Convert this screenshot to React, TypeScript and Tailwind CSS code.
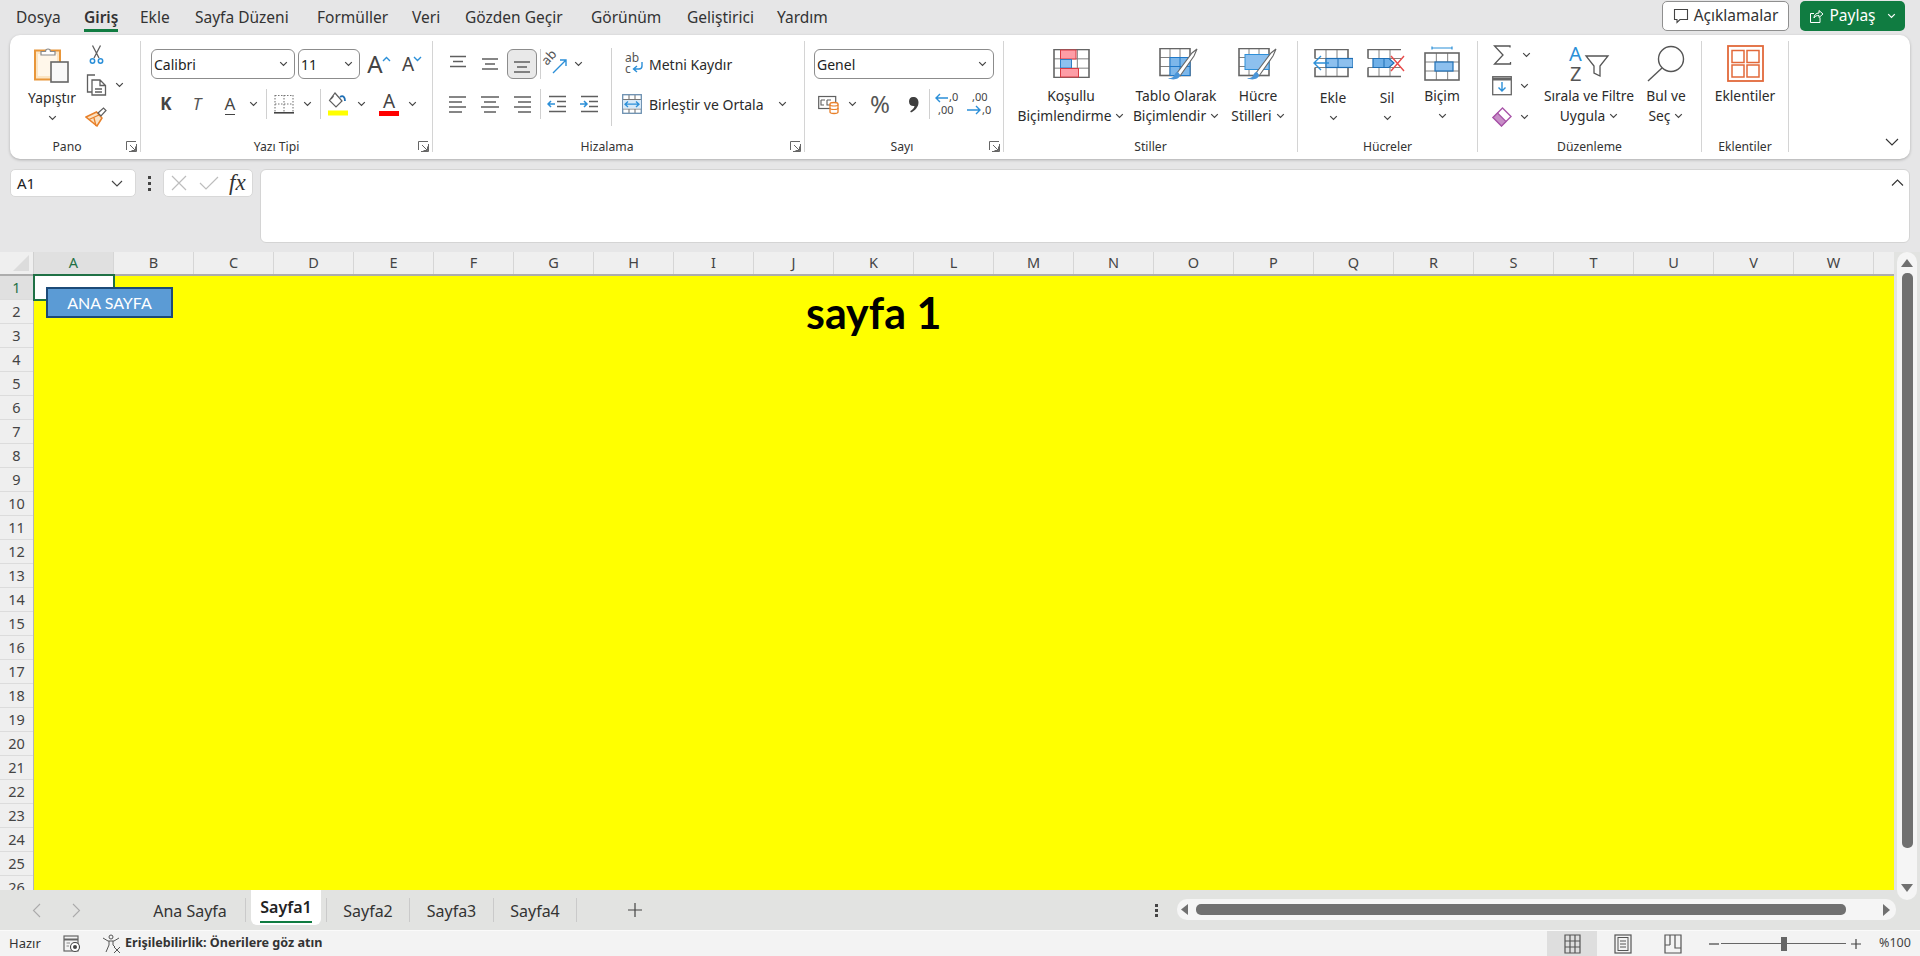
import React from "react";

const G = "#5f5f5f";
const B = "#2b8fd8";

function Chev({ className = "" }: { className?: string }) {
  return (
    <svg width="9" height="6" viewBox="0 0 9 6" className={"shrink-0 " + className}>
      <path d="M1.2 1.2 4.5 4.5 7.8 1.2" fill="none" stroke="#444" strokeWidth="1.2" />
    </svg>
  );
}
function Launcher() {
  return (
    <svg width="11" height="11" viewBox="0 0 11 11" className="absolute right-[3px] top-[3px]">
      <path d="M.5 9V.5H10M4 4l5.5 5.5M9.5 5.5v4h-4M10.5 3v7.5H3" fill="none" stroke="#666" strokeWidth="1" />
    </svg>
  );
}
function Cell({ className = "", children }: { className?: string; children?: React.ReactNode }) {
  return <div className={"flex items-center justify-center shrink-0 h-full " + className}>{children}</div>;
}
function Sep() {
  return <div className="w-px h-[30px] bg-[#d0d0d0] shrink-0" />;
}
function Group({ className, label, labelClass = "", launcher, children }: { className: string; label: string; labelClass?: string; launcher?: boolean; children: React.ReactNode }) {
  return (
    <div className={"flex flex-col shrink-0 h-[111px] border-r border-[#d4d4d4] " + className}>
      <div className="h-[97px] shrink-0">{children}</div>
      <div className={"relative h-[14px] leading-[18px] text-center text-[12.2px] text-[#333] " + labelClass}>
        {label}
        {launcher && <Launcher />}
      </div>
    </div>
  );
}
function Select({ className, label }: { className: string; label: string }) {
  return (
    <div className={"h-[30px] shrink-0 rounded-[6px] border border-[#8c8c8c] flex items-center justify-between pl-[2px] pr-[6px] text-[14px] text-[#222] bg-white " + className}>
      <span>{label}</span>
      <Chev />
    </div>
  );
}
function BigBtn({ className, icon, l1, l2, chev2, chevBelow, textClass = "" }: { className: string; icon: React.ReactNode; l1: string; l2?: string; chev2?: boolean; chevBelow?: boolean; textClass?: string }) {
  return (
    <div className={"flex flex-col items-center shrink-0 h-full " + className}>
      <div className="h-[45px] flex items-center justify-center shrink-0">{icon}</div>
      <div className={"h-[20px] leading-[20px] text-[13.8px] text-[#2b2b2b] whitespace-nowrap " + textClass}>{l1}</div>
      {l2 && (
        <div className="h-[20px] leading-[20px] text-[13.8px] text-[#2b2b2b] whitespace-nowrap flex items-center gap-[4px]">
          {l2}
          {chev2 && <Chev />}
        </div>
      )}
      {chevBelow && (
        <div className="h-[20px] flex items-center">
          <Chev />
        </div>
      )}
    </div>
  );
}

function Paste() {
  return (
    <svg width="36" height="38" viewBox="0 0 36 38">
      <rect x="1" y="5.5" width="25" height="29" fill="#fbe5c4" stroke="#e8963a" strokeWidth="2" />
      <rect x="4" y="9" width="19" height="22" fill="#fff7ea" />
      <path d="M7 10V6.5h4.5a2.5 2.5 0 0 1 5 0H21V10z" fill="#fff" stroke="#8a8a8a" strokeWidth="1.2" />
      <rect x="17" y="17" width="17" height="20" fill="#f8f8f8" stroke="#666" strokeWidth="1.6" />
    </svg>
  );
}
function Scissors() {
  return (
    <svg width="15" height="20" viewBox="0 0 15 20">
      <path d="M3.5 .5 10 13M11.5 .5 5 13" fill="none" stroke={G} strokeWidth="1.3" />
      <circle cx="3.5" cy="16" r="2.2" fill="none" stroke={B} strokeWidth="1.5" />
      <circle cx="11.5" cy="16" r="2.2" fill="none" stroke={B} strokeWidth="1.5" />
    </svg>
  );
}
function Copy() {
  return (
    <svg width="21" height="22" viewBox="0 0 21 22">
      <path d="M9 1H1.5v17H6" fill="none" stroke={G} strokeWidth="1.3" />
      <path d="M6 6h8l5.5 5.5V21H6zM14 6v5.5h5.5M9 15h7M9 18h7" fill="#fff" stroke={G} strokeWidth="1.3" />
    </svg>
  );
}
function Painter() {
  return (
    <svg width="22" height="20" viewBox="0 0 22 20">
      <path d="M1 10 11.5 5 17 11l-5 8z" fill="#fbe2c3" stroke="#e8802a" strokeWidth="1.5" />
      <path d="M4 12.5 14 8M9 11l2 8" stroke="#e8802a" strokeWidth="1.3" />
      <path d="M13 6 18.5 1 21 3.5 16 9z" fill="#fff" stroke={G} strokeWidth="1.2" />
    </svg>
  );
}
function GrowArrow({ down = false }: { down?: boolean }) {
  return (
    <svg width="9" height="6" viewBox="0 0 9 6" className="mb-[17px] -ml-[1px] shrink-0">
      <path d={down ? "M1 1l3.5 3.5L8 1" : "M1 5l3.5-3.5L8 5"} fill="none" stroke={B} strokeWidth="1.4" />
    </svg>
  );
}
function Borders() {
  return (
    <svg width="20" height="20" viewBox="0 0 20 20">
      <path d="M1 1.5H19M1 10H19M1 1v17M10 1v17M19 1v17" fill="none" stroke="#777" strokeWidth="1.1" strokeDasharray="1.5 1.5" />
      <path d="M0 18.8H20" stroke="#444" strokeWidth="1.6" />
    </svg>
  );
}
function Bucket() {
  return (
    <svg width="21" height="24" viewBox="0 0 21 24">
      <path d="M7 1 14 9 8 15 1.500 8.500z" fill="#fff" stroke={G} strokeWidth="1.2" />
      <path d="M5.500 4 3 7" stroke={G} strokeWidth="1.2" />
      <path d="M12 5c3-2 5 0 5 4" fill="none" stroke="#1f6fb5" strokeWidth="1.8" />
      <rect x="0" y="18.500" width="20" height="5" fill="#ffff00" />
    </svg>
  );
}
function Lines({ d, blue }: { d: string; blue?: string }) {
  return (
    <svg width="20" height="20" viewBox="0 0 20 20">
      <path d={d} fill="none" stroke={G} strokeWidth="1.4" />
      {blue && <path d={blue} fill="none" stroke={B} strokeWidth="1.5" />}
    </svg>
  );
}
function Orient() {
  return (
    <svg width="24" height="24" viewBox="0 0 24 24" className="overflow-visible">
      <text x="0" y="0" fontSize="13" fill="#555" fontFamily="Noto Sans" transform="translate(2 14) rotate(-48)">ab</text>
      <path d="M8 21 21 8M15 8h6v6" fill="none" stroke={B} strokeWidth="1.4" />
    </svg>
  );
}
function Wrap() {
  return (
    <svg width="20" height="24" viewBox="0 0 20 24" className="overflow-visible">
      <text x="0" y="10" fontSize="12" fill="#555" fontFamily="Noto Sans">ab</text>
      <text x="0" y="21" fontSize="12" fill="#555" fontFamily="Noto Sans">c</text>
      <path d="M17 10v4a3 3 0 0 1-3 3H9M12 14l-3.500 3 3.500 3" fill="none" stroke={B} strokeWidth="1.4" />
    </svg>
  );
}
function Merge() {
  return (
    <svg width="20" height="20" viewBox="0 0 20 20">
      <path d="M7 1v4M13 1v4M7 15v4M13 15v4M1 5.500H19M1 15H19" stroke="#777" strokeWidth="1.1" />
      <rect x=".7" y=".7" width="18.600" height="18.600" fill="none" stroke="#6b8fb0" strokeWidth="1.3" />
      <rect x="1" y="6" width="18" height="8.500" fill="#d7e9f8" />
      <path d="M3 10.200H17M6 7.500 3 10.200l3 2.800M14 7.500l3 2.700-3 2.800" fill="none" stroke={B} strokeWidth="1.3" />
    </svg>
  );
}
function Accounting() {
  return (
    <svg width="22" height="22" viewBox="0 0 22 22">
      <rect x=".7" y="3.500" width="17" height="12" fill="#fff" stroke={G} strokeWidth="1.2" />
      <path d="M3 7H7M3 7v5h3M9 7H13M9 7v5h3" fill="none" stroke={G} strokeWidth="1.1" />
      <path d="M12 11c0-2 8-2 8 0v8c0 2-8 2-8 0z" fill="#fff" stroke="#e8802a" strokeWidth="1.3" />
      <path d="M12 11.500c0 2 8 2 8 0M12 15c0 2 8 2 8 0" fill="none" stroke="#e8802a" strokeWidth="1.2" />
    </svg>
  );
}
function CommaIcon() {
  return (
    <svg width="11" height="17" viewBox="0 0 11 17">
      <path d="M5 1c3.500 0 5.500 2 5.500 5.500 0 4.500-3.500 8-7.500 10l-.8-1.200c2.500-1.500 4-3.300 4.300-5.300C3.500 10.500 1 9 1 5.500 1 3 2.500 1 5 1z" fill="#3f3f3f" />
    </svg>
  );
}
function Decimal({ more = false }: { more?: boolean }) {
  return (
    <svg width="24" height="26" viewBox="0 0 24 26" className="overflow-visible">
      {more ? (
        <>
          <text x="14" y="10" fontSize="11" fill="#444" fontFamily="Noto Sans">,0</text>
          <text x="3" y="23" fontSize="11" fill="#444" fontFamily="Noto Sans">,00</text>
          <path d="M13 7H1M5 3 1 7l4 4" fill="none" stroke={B} strokeWidth="1.4" />
        </>
      ) : (
        <>
          <text x="5" y="10" fontSize="11" fill="#444" fontFamily="Noto Sans">,00</text>
          <text x="15" y="23" fontSize="11" fill="#444" fontFamily="Noto Sans">,0</text>
          <path d="M0 19H13M9 15l4 4-4 4" fill="none" stroke={B} strokeWidth="1.4" />
        </>
      )}
    </svg>
  );
}
function GridLines({ w = 35, h = 28 }: { w?: number; h?: number }) {
  const c1 = w / 3;
  const r1 = h / 3;
  return (
    <path
      d={`M${c1} 0V${h}M${c1 * 2} 0V${h}M0 ${r1}H${w}M0 ${r1 * 2}H${w}`}
      fill="none"
      stroke="#808080"
      strokeWidth="1"
    />
  );
}
function Brush() {
  return (
    <g>
      <path d="M18 25 33 5 38 1 35 8 21 28z" fill="#fff" stroke="#666" strokeWidth="1.1" />
      <path d="M19 24c-3 0-3 3-5 5-1 1-3 1-5 1 5 3 12 1 12-3z" fill="#4a95d8" />
    </g>
  );
}
function CondFmt() {
  return (
    <svg width="37" height="29" viewBox="0 0 37 29">
      <g transform="translate(1 .5)">
        <rect width="35" height="28" fill="#fff" />
        <GridLines />
        <rect width="35" height="28" fill="none" stroke="#666" strokeWidth="1.600" />
        <rect x="6.500" y=".5" width="15.500" height="9" fill="#fd9da6" stroke="#d83b43" strokeWidth="1" />
        <rect x="6.500" y="10" width="11" height="8.500" fill="#8dc0ee" stroke="#2f7fc4" strokeWidth="1" />
        <rect x="6.500" y="19" width="18" height="8.500" fill="#fd9da6" stroke="#d83b43" strokeWidth="1" />
      </g>
    </svg>
  );
}
function TableFmt() {
  return (
    <svg width="40" height="32" viewBox="0 0 40 32" className="ml-[6px]">
      <g transform="translate(1 .5)">
        <rect width="30" height="27" fill="#fff" />
        <GridLines w={30} h={27} />
        <rect width="30" height="27" fill="none" stroke="#666" strokeWidth="1.600" />
        <rect x="10" y="9" width="20" height="18" fill="#7db7ea" stroke="#1f78c8" strokeWidth="1" />
        <path d="M10 18H30M20 9V27" stroke="#1f78c8" strokeWidth="1" />
      </g>
      <Brush />
    </svg>
  );
}
function CellStyle() {
  return (
    <svg width="40" height="32" viewBox="0 0 40 32">
      <g transform="translate(1 .5)">
        <rect width="30" height="27" fill="#fff" />
        <GridLines w={30} h={27} />
        <rect width="30" height="27" fill="none" stroke="#666" strokeWidth="1.600" />
        <rect x="6" y="6" width="24" height="15" fill="#8dc0ee" stroke="#2f8fd8" strokeWidth="1" />
      </g>
      <Brush />
    </svg>
  );
}
function InsertIcon() {
  return (
    <svg width="40" height="29" viewBox="0 0 40 29">
      <g transform="translate(2 .5)">
        <GridLines w={33} h={27} />
        <path d="M0 9V0H33V9M0 18V27H33V18" fill="none" stroke="#666" strokeWidth="1.600" />
        <rect x="11" y="9" width="27" height="9" fill="#8dc0ee" stroke="#1f6fb5" strokeWidth="1.200" />
        <path d="M23 9V18" stroke="#1f6fb5" strokeWidth="1" />
      </g>
      <path d="M16 14H2M8 7 1 14l7 7" fill="none" stroke={B} strokeWidth="1.400" />
    </svg>
  );
}
function DeleteIcon() {
  return (
    <svg width="40" height="29" viewBox="0 0 40 29">
      <g transform="translate(1 .5)">
        <GridLines w={33} h={27} />
        <path d="M0 9V0H33M0 18V27H33" fill="none" stroke="#666" strokeWidth="1.600" />
        <path d="M5 9H21L26 13.500 21 18H5z" fill="#6fb0e8" stroke="#1f6fb5" strokeWidth="1.200" />
        <path d="M16 9V18" stroke="#1f6fb5" strokeWidth="1" />
      </g>
      <path d="M24 7 37 22M37 7 24 22" stroke="#e84a4a" strokeWidth="1.400" />
    </svg>
  );
}
function FormatIcon() {
  return (
    <svg width="36" height="35" viewBox="0 0 36 35">
      <path d="M8 2H28M8 .5V3.500M28 .5V3.500" fill="none" stroke={B} strokeWidth="1.200" />
      <g transform="translate(1 7)">
        <rect width="34" height="27" fill="#fff" />
        <GridLines w={34} h={27} />
        <rect width="34" height="27" fill="none" stroke="#666" strokeWidth="1.600" />
        <rect x="10" y="9" width="18" height="9" fill="#8dc0ee" stroke="#1f6fb5" strokeWidth="1.200" />
      </g>
    </svg>
  );
}
function Sigma() {
  return (
    <svg width="19" height="20" viewBox="0 0 19 20">
      <path d="M17 2.500V1H1.500L10 10 1.500 19H17.500V17" fill="none" stroke="#555" strokeWidth="1.300" />
    </svg>
  );
}
function FillDown() {
  return (
    <svg width="20" height="20" viewBox="0 0 20 20">
      <rect x=".7" y=".7" width="18.600" height="18" fill="#fff" stroke="#666" strokeWidth="1.300" />
      <path d="M1 3H19" stroke="#666" strokeWidth="3" />
      <path d="M10 6V15M6.500 11.500 10 15l3.500-3.500" fill="none" stroke={B} strokeWidth="1.400" />
    </svg>
  );
}
function Eraser() {
  return (
    <svg width="20" height="20" viewBox="0 0 20 20">
      <path d="M10.500 1 19 9.500 9.500 19 1 10.500z" fill="#fff" stroke="#a854a8" strokeWidth="1.400" />
      <path d="M5.500 6 14 14.500 9.500 19 1 10.500z" fill="#c78ec7" stroke="#a854a8" strokeWidth="1.200" />
    </svg>
  );
}
function SortIcon() {
  return (
    <svg width="40" height="36" viewBox="0 0 40 36" className="overflow-visible">
      <text x="0" y="15" fontSize="20" fill={B} fontFamily="Noto Sans">A</text>
      <text x="1" y="35" fontSize="20" fill="#555" fontFamily="Noto Sans">Z</text>
      <path d="M17 10H39L31 20V30L25 27V20z" fill="#fff" stroke="#555" strokeWidth="1.300" />
    </svg>
  );
}
function Magnifier() {
  return (
    <svg width="38" height="37" viewBox="0 0 38 37">
      <circle cx="24" cy="14" r="12.500" fill="#fff" stroke="#555" strokeWidth="1.400" />
      <path d="M15 23 1 36" stroke="#555" strokeWidth="1.400" />
    </svg>
  );
}
function AddIns() {
  return (
    <svg width="37" height="37" viewBox="0 0 37 37">
      <rect x="1" y="1" width="35" height="35" fill="none" stroke="#e2693a" strokeWidth="1.800" />
      <rect x="5" y="5.500" width="12" height="12" fill="none" stroke="#e2693a" strokeWidth="1.500" />
      <rect x="20" y="5.500" width="12" height="12" fill="none" stroke="#e2693a" strokeWidth="1.500" />
      <rect x="5" y="20" width="12" height="12" fill="none" stroke="#e2693a" strokeWidth="1.500" />
      <rect x="20" y="20" width="12" height="12" fill="none" stroke="#e2693a" strokeWidth="1.500" />
    </svg>
  );
}

const tabs = [
  ["Dosya", "w-[68px]", ""],
  ["Giriş", "w-[56px]", "active"],
  ["Ekle", "w-[55px]", ""],
  ["Sayfa Düzeni", "w-[122px]", ""],
  ["Formüller", "w-[95px]", ""],
  ["Veri", "w-[53px]", ""],
  ["Gözden Geçir", "w-[126px]", ""],
  ["Görünüm", "w-[96px]", ""],
  ["Geliştirici", "w-[90px]", ""],
  ["Yardım", "w-[60px]", ""],
];
const cols = "ABCDEFGHIJKLMNOPQRSTUVW".split("");
const rows = Array.from({ length: 26 }, (_, i) => i + 1);

function Tabs() {
  return (
    <div className="h-[35px] shrink-0 flex pl-[16px] pr-[15px]">
      {tabs.map(([t, w, a]) => (
        <div key={t} className={"shrink-0 " + w}>
          <div className={"inline-block h-[32px] leading-[34px] text-[15.5px] text-[#333] whitespace-nowrap border-b-[3px] " + (a ? "font-semibold border-[#107c41]" : "border-transparent")}>{t}</div>
        </div>
      ))}
      <div className="flex-1" />
      <div className="mt-[1px] h-[30px] w-[127px] rounded-[5px] border border-[#8f8f8f] bg-white flex items-center justify-center gap-[5px] text-[15.5px] text-[#333]">
        <svg width="16" height="16" viewBox="0 0 16 16">
          <path d="M1.500 1.500H14.500V11.500H7L4 14.500V11.500H1.500z" fill="none" stroke="#444" strokeWidth="1.100" />
        </svg>
        Açıklamalar
      </div>
      <div className="ml-[11px] mt-[1px] h-[30px] w-[105px] rounded-[5px] bg-[#107c41] flex items-center justify-center gap-[5px] text-[15.5px] text-white">
        <svg width="15" height="15" viewBox="0 0 15 15">
          <path d="M11 8.500V13.500H1.500V4.500H5M5 9c0-3 2-5 5-5V1.500L14 5l-4 3.500V6.500C7.500 6.500 6 7 5 9z" fill="none" stroke="#fff" strokeWidth="1" />
        </svg>
        Paylaş
        <svg width="9" height="6" viewBox="0 0 9 6" className="ml-[6px]">
          <path d="M1.200 1.200 4.500 4.500 7.800 1.200" fill="none" stroke="#fff" strokeWidth="1.200" />
        </svg>
      </div>
    </div>
  );
}

function Ribbon() {
  return (
    <div className="ml-[10px] w-[1900px] h-[124px] shrink-0 bg-white rounded-[10px] shadow-[0_1px_3px_rgba(0,0,0,0.25)] pt-[6px] flex">
      <Group className="w-[131px]" label="Pano" labelClass="pr-[16px]" launcher>
        <div className="flex h-full pl-[14px]">
          <BigBtn className="w-[56px]" icon={<Paste />} l1="Yapıştır" chevBelow textClass="mt-[2px]" />
          <div className="ml-[4px] w-[46px] flex flex-col shrink-0">
            <div className="h-[28px] flex"><Cell className="w-[24px]"><Scissors /></Cell></div>
            <div className="h-[32px] flex"><Cell className="w-[24px]"><Copy /></Cell><Cell className="w-[22px]"><Chev /></Cell></div>
            <div className="h-[31px] flex"><Cell className="w-[24px]"><Painter /></Cell></div>
          </div>
        </div>
      </Group>

      <Group className="w-[292px]" label="Yazı Tipi" labelClass="pr-[20px]" launcher>
        <div className="flex flex-col h-full pl-[10px] pt-[8px]">
          <div className="h-[30px] flex items-center">
            <Select className="w-[144px]" label="Calibri" />
            <Select className="w-[62px] ml-[3px]" label="11" />
            <div className="w-[36px] ml-[1px] h-[30px] flex items-end justify-center">
              <span className="text-[24px] leading-[30px] text-[#444]">A</span><GrowArrow />
            </div>
            <div className="w-[30px] h-[30px] flex items-end justify-center">
              <span className="text-[19px] leading-[29px] text-[#444]">A</span><GrowArrow down />
            </div>
          </div>
          <div className="h-[30px] mt-[10px] flex items-center">
            <Cell className="w-[30px] text-[17px] font-bold text-[#444]">K</Cell>
            <Cell className="w-[32px] text-[17px] italic text-[#555]">T</Cell>
            <Cell className="w-[34px]"><span className="text-[17px] leading-[21px] text-[#444] border-b border-[#444]">A</span></Cell>
            <Cell className="w-[12px]"><Chev /></Cell>
            <div className="w-[7px]" />
            <Sep />
            <Cell className="w-[34px]"><Borders /></Cell>
            <Cell className="w-[12px]"><Chev /></Cell>
            <div className="w-[7px]" />
            <Sep />
            <Cell className="w-[34px]"><Bucket /></Cell>
            <Cell className="w-[12px]"><Chev /></Cell>
            <Cell className="w-[36px] ml-[4px]">
              <div className="flex flex-col items-center w-[20px]">
                <span className="text-[19px] leading-[19px] text-[#444]">A</span>
                <div className="w-[20px] h-[5px] bg-[#ff0000]" />
              </div>
            </Cell>
            <Cell className="w-[10px]"><Chev /></Cell>
          </div>
        </div>
      </Group>

      <Group className="w-[372px]" label="Hizalama" labelClass="pr-[23px]" launcher>
        <div className="flex h-full pl-[10px]">
          <div className="flex flex-col pt-[8px] shrink-0">
            <div className="h-[30px] flex items-center">
              <Cell className="w-[30px]"><Lines d="M2 2.500H18M5 7.500H15M2 12.500H18" /></Cell>
              <Cell className="w-[30px] ml-[2px]"><Lines d="M2 5H18M5 10H15M2 15H18" /></Cell>
              <Cell className="w-[30px] ml-[2px] rounded-[6px] border border-[#8c8c8c] bg-[#e9e9e9]"><Lines d="M2 8H18M5 13H15M2 18H18" /></Cell>
              <div className="w-[3px]" />
              <Sep />
              <Cell className="w-[32px]"><Orient /></Cell>
              <Cell className="w-[10px]"><Chev /></Cell>
            </div>
            <div className="h-[30px] mt-[10px] flex items-center">
              <Cell className="w-[30px]"><Lines d="M1 3H18M1 8H14M1 13H18M1 18H14" /></Cell>
              <Cell className="w-[30px] ml-[2px]"><Lines d="M1 3H19M4 8H16M1 13H19M4 18H16" /></Cell>
              <Cell className="w-[30px] ml-[2px]"><Lines d="M2 3H19M6 8H19M2 13H19M6 18H19" /></Cell>
              <div className="w-[3px]" />
              <Sep />
              <Cell className="w-[32px]"><Lines d="M2 2.500H19M10 7.500H19M10 12.500H19M2 17.500H19" blue="M8 10H1M4 7 1 10l3 3" /></Cell>
              <Cell className="w-[32px]"><Lines d="M2 2.500H19M10 7.500H19M10 12.500H19M2 17.500H19" blue="M1 10H8M5 7l3 3-3 3" /></Cell>
            </div>
          </div>
          <div className="w-px h-[78px] mt-[7px] ml-[6px] bg-[#d0d0d0] shrink-0" />
          <div className="flex flex-col">
            <div className="h-[24px] mt-[11px] flex items-center text-[14px] text-[#2b2b2b] whitespace-nowrap">
              <Cell className="w-[37px] pl-[8px]"><Wrap /></Cell>Metni Kaydır
            </div>
            <div className="h-[24px] mt-[16px] flex items-center text-[14px] text-[#2b2b2b] whitespace-nowrap">
              <Cell className="w-[37px] pl-[3px]"><Merge /></Cell>Birleştir ve Ortala
              <Chev className="ml-[14px]" />
            </div>
          </div>
        </div>
      </Group>

      <Group className="w-[199px]" label="Sayı" labelClass="pr-[4px]" launcher>
        <div className="flex flex-col h-full pl-[9px] pt-[8px]">
          <Select className="w-[180px]" label="Genel" />
          <div className="h-[30px] mt-[10px] flex items-center">
            <Cell className="w-[30px]"><Accounting /></Cell>
            <Cell className="w-[16px]"><Chev /></Cell>
            <Cell className="w-[40px] text-[24px] text-[#555]">%</Cell>
            <Cell className="w-[26px]"><CommaIcon /></Cell>
            <div className="w-[3px]" />
            <Sep />
            <Cell className="w-[34px]"><Decimal more /></Cell>
            <Cell className="w-[30px]"><Decimal /></Cell>
          </div>
        </div>
      </Group>

      <Group className="w-[294px]" label="Stiller">
        <div className="flex h-full pl-[8px]">
          <BigBtn className="w-[118px]" icon={<CondFmt />} l1="Koşullu" l2="Biçimlendirme" chev2 />
          <BigBtn className="w-[92px]" icon={<TableFmt />} l1="Tablo Olarak" l2="Biçimlendir" chev2 />
          <BigBtn className="w-[72px]" icon={<CellStyle />} l1="Hücre" l2="Stilleri" chev2 />
        </div>
      </Group>

      <Group className="w-[180px]" label="Hücreler">
        <div className="flex h-full pl-[8px]">
          <BigBtn className="w-[54px]" icon={<InsertIcon />} l1="Ekle" chevBelow textClass="mt-[2px]" />
          <BigBtn className="w-[54px]" icon={<DeleteIcon />} l1="Sil" chevBelow textClass="mt-[2px]" />
          <BigBtn className="w-[56px]" icon={<FormatIcon />} l1="Biçim" chevBelow />
        </div>
      </Group>

      <Group className="w-[224px]" label="Düzenleme">
        <div className="flex h-full pl-[8px]">
          <div className="w-[52px] flex flex-col shrink-0">
            <div className="h-[28px] flex"><Cell className="w-[32px]"><Sigma /></Cell><Cell className="w-[16px]"><Chev /></Cell></div>
            <div className="h-[33px] flex"><Cell className="w-[32px]"><FillDown /></Cell><Cell className="w-[12px]"><Chev /></Cell></div>
            <div className="h-[30px] flex"><Cell className="w-[32px]"><Eraser /></Cell><Cell className="w-[12px]"><Chev /></Cell></div>
          </div>
          <BigBtn className="w-[102px]" icon={<SortIcon />} l1="Sırala ve Filtre" l2="Uygula" chev2 />
          <BigBtn className="w-[52px]" icon={<Magnifier />} l1="Bul ve" l2="Seç" chev2 />
        </div>
      </Group>

      <Group className="w-[87px]" label="Eklentiler">
        <div className="flex h-full justify-center">
          <BigBtn className="w-[80px]" icon={<AddIns />} l1="Eklentiler" />
        </div>
      </Group>

      <div className="flex-1 flex items-start justify-end pt-[97px] pr-[11px]">
        <svg width="14" height="8" viewBox="0 0 14 8"><path d="M1 1l6 6 6-6" fill="none" stroke="#333" strokeWidth="1.100" /></svg>
      </div>
    </div>
  );
}

function FormulaBar() {
  return (
    <div className="h-[93px] shrink-0 pt-[10px] flex items-start">
      <div className="ml-[10px] w-[126px] h-[28px] rounded-[5px] bg-white border border-[#d8d8d8] flex items-center justify-between pl-[6px] pr-[12px] text-[15px] text-[#222]">
        A1
        <svg width="12" height="7" viewBox="0 0 12 7"><path d="M1 1l5 5 5-5" fill="none" stroke="#444" strokeWidth="1.100" /></svg>
      </div>
      <div className="w-[27px] h-[28px] flex flex-col items-center justify-center gap-[3px]">
        <div className="w-[3px] h-[3px] bg-[#444]" />
        <div className="w-[3px] h-[3px] bg-[#444]" />
        <div className="w-[3px] h-[3px] bg-[#444]" />
      </div>
      <div className="w-[90px] h-[28px] rounded-[5px] bg-white border border-[#d8d8d8] flex items-center pl-[7px]">
        <svg width="16" height="16" viewBox="0 0 16 16"><path d="M1 1l14 14M15 1 1 15" stroke="#bdbdbd" strokeWidth="1.200" /></svg>
        <svg width="20" height="14" viewBox="0 0 20 14" className="ml-[12px]"><path d="M1 7l6 6L19 1" fill="none" stroke="#bdbdbd" strokeWidth="1.200" /></svg>
        <span className="ml-[10px] font-['Liberation_Serif',serif] italic text-[23px] text-[#333] leading-[20px]">fx</span>
      </div>
      <div className="ml-[7px] w-[1650px] h-[74px] rounded-[6px] bg-white border border-[#d4d4d4] flex justify-end pt-[9px] pr-[5px]">
        <svg width="13" height="7" viewBox="0 0 13 7"><path d="M1 6.500l5.500-5.500L12 6.500" fill="none" stroke="#333" strokeWidth="1.100" /></svg>
      </div>
    </div>
  );
}

function Grid() {
  return (
    <div className="w-[1894px] h-[638px] shrink-0 flex flex-col overflow-hidden">
      <div className="h-[24px] shrink-0 flex bg-[#efefef] border-b-2 border-[#adadad]">
        <div className="w-[34px] shrink-0 flex items-end justify-end pr-[4px] pb-[3px] border-r border-[#d0d0d0]">
          <svg width="16" height="16" viewBox="0 0 16 16"><path d="M16 0V16H0z" fill="#dcdcdc" /></svg>
        </div>
        {cols.map((c) => (
          <div key={c} className={"w-[80px] shrink-0 flex items-center justify-center text-[14.5px] border-r border-[#d6d6d6] " + (c === "A" ? "bg-[#e0e0e0] text-[#1f7145]" : "text-[#444]")}>{c}</div>
        ))}
        <div className="flex-1" />
      </div>
      <div className="flex-1 flex min-h-0">
        <div className="w-[34px] shrink-0 overflow-hidden bg-[#efefef] border-r border-[#b5b5b5]">
          {rows.map((r) => (
            <div key={r} className={"h-[24px] flex items-center justify-center text-[14.5px] border-b border-[#dcdcdc] " + (r === 1 ? "bg-[#e0e0e0] text-[#1f7145]" : "text-[#444]")}>{r}</div>
          ))}
        </div>
        <div className="flex-1 bg-[#ffff00] relative">
          <div className="absolute left-[-1px] top-[-2px] w-[82px] h-[27px] border-2 border-[#1f7145] bg-white" />
          <div className="absolute left-[12px] top-[11px] w-[127px] h-[31px] border-[2px] border-[#1c4a78] bg-[#5b9bd5] flex items-center justify-center text-white text-[16px] font-['Lato',sans-serif]">ANA SAYFA</div>
          <div className="ml-[772px] pt-[12px] text-[43px] leading-[50px] font-bold text-black font-['Lato',sans-serif] whitespace-nowrap">sayfa 1</div>
        </div>
      </div>
    </div>
  );
}

function SheetTabs() {
  return (
    <div className="h-[40px] shrink-0 flex items-start text-[16px] text-[#333]">
      <Cell className="w-[40px] ml-[16px] h-[36px]">
        <svg width="9" height="15" viewBox="0 0 9 15"><path d="M8 1 1.500 7.500 8 14" fill="none" stroke="#aaa" strokeWidth="1.100" /></svg>
      </Cell>
      <Cell className="w-[40px] h-[36px]">
        <svg width="9" height="15" viewBox="0 0 9 15"><path d="M1 1l6.500 6.500L1 14" fill="none" stroke="#aaa" strokeWidth="1.100" /></svg>
      </Cell>
      <div className="w-[39px]" />
      <div className="w-[110px] h-[32px] mt-[5px] flex items-center justify-center">Ana Sayfa</div>
      <div className="w-px h-[24px] mt-[8px] bg-[#cacaca]" />
      <div className="ml-[5px] w-[70px] h-[35px] bg-white rounded-b-[6px] flex flex-col items-center font-semibold text-[#222]">
        <div className="pt-[4px] h-[33px] leading-[26px] border-b-2 border-[#107c41]">Sayfa1</div>
      </div>
      <div className="ml-[5px] w-px h-[24px] mt-[8px] bg-[#cacaca]" />
      <div className="w-[82px] h-[32px] mt-[5px] flex items-center justify-center">Sayfa2</div>
      <div className="w-px h-[24px] mt-[8px] bg-[#cacaca]" />
      <div className="w-[83px] h-[32px] mt-[5px] flex items-center justify-center">Sayfa3</div>
      <div className="w-px h-[24px] mt-[8px] bg-[#cacaca]" />
      <div className="w-[82px] h-[32px] mt-[5px] flex items-center justify-center">Sayfa4</div>
      <div className="w-px h-[24px] mt-[8px] bg-[#cacaca]" />
      <Cell className="w-[40px] ml-[38px] h-[36px]">
        <svg width="14" height="14" viewBox="0 0 14 14"><path d="M7 0V14M0 7H14" stroke="#444" strokeWidth="1.200" /></svg>
      </Cell>
      <div className="flex-1" />
      <Cell className="w-[24px] h-[36px]">
        <div className="flex flex-col gap-[2px]">
          <div className="w-[3px] h-[3px] bg-[#444]" />
          <div className="w-[3px] h-[3px] bg-[#444]" />
          <div className="w-[3px] h-[3px] bg-[#444]" />
        </div>
      </Cell>
      <div className="ml-[9px] w-[719px] h-[21px] mt-[9px] rounded-[10px] bg-[#f5f5f5] flex items-center">
        <svg width="7" height="11" viewBox="0 0 7 11" className="ml-[4px]"><path d="M7 0V11L0 5.500z" fill="#707070" /></svg>
        <div className="ml-[8px] w-[650px] h-[11px] rounded-[5px] bg-[#707070]" />
        <svg width="7" height="12" viewBox="0 0 7 12" className="ml-[37px]"><path d="M0 0V12L7 6z" fill="#707070" /></svg>
      </div>
    </div>
  );
}

function VScroll() {
  return (
    <div className="ml-[1px] w-[20px] h-[648px] rounded-[10px] bg-[#f5f5f5] flex flex-col items-center shrink-0">
      <svg width="12" height="8" viewBox="0 0 12 8" className="mt-[7px] shrink-0"><path d="M0 8H12L6 0z" fill="#707070" /></svg>
      <div className="mt-[6px] w-[11px] h-[575px] rounded-[5px] bg-[#707070] shrink-0" />
      <div className="flex-1" />
      <svg width="12" height="8" viewBox="0 0 12 8" className="mb-[8px] shrink-0"><path d="M0 0H12L6 8z" fill="#707070" /></svg>
    </div>
  );
}

function StatusBar() {
  return (
    <div className="h-[26px] shrink-0 bg-[#f3f3f3] border-t border-[#fafafa] flex items-center text-[13px] text-[#333]">
      <span className="ml-[9px] w-[54px]">Hazır</span>
      <svg width="18" height="18" viewBox="0 0 18 18">
        <rect x="1" y="1" width="14" height="15" fill="none" stroke="#666" strokeWidth="1.200" />
        <path d="M1 4.500H15" stroke="#666" strokeWidth="2" />
        <path d="M3.500 8H7M3.500 11H6" stroke="#888" />
        <circle cx="12" cy="12" r="4.500" fill="#fff" stroke="#444" strokeWidth="1.100" />
        <circle cx="12" cy="12" r="2" fill="#444" />
      </svg>
      <svg width="20" height="20" viewBox="0 0 20 20" className="ml-[21px]">
        <circle cx="9" cy="3" r="2" fill="none" stroke="#555" />
        <path d="M1 4l5 3h6l5-3M7 7v4l-3 7M11 7v4l2 2" fill="none" stroke="#555" />
        <path d="M12 13l6 6M18 13l-6 6" stroke="#555" />
      </svg>
      <span className="ml-[3px] text-[12.6px] font-bold text-[#333] whitespace-nowrap">Erişilebilirlik: Önerilere göz atın</span>
      <div className="flex-1" />
      <div className="w-[50px] h-[25px] bg-[#dedede] flex items-center justify-center">
        <svg width="17" height="20" viewBox="0 0 17 20"><path d="M1 1H16V19H1zM6 1V19M11 1V19M1 7H16M1 13H16" fill="none" stroke="#555" strokeWidth="1.200" /></svg>
      </div>
      <div className="w-[51px] flex items-center justify-center">
        <svg width="18" height="20" viewBox="0 0 18 20"><rect x="1" y="1" width="16" height="18" fill="none" stroke="#555" strokeWidth="1.200" /><rect x="4" y="3.500" width="10" height="13" fill="none" stroke="#555" /><path d="M6 7H12M6 10H12M6 13H12" stroke="#555" /></svg>
      </div>
      <div className="w-[50px] flex items-center justify-center">
        <svg width="18" height="20" viewBox="0 0 18 20"><path d="M1 1H17V19H1zM6 1V11M11 1V14H17M1 11H6" fill="none" stroke="#555" strokeWidth="1.200" /></svg>
      </div>
      <svg width="10" height="2" viewBox="0 0 10 2" className="ml-[11px]"><path d="M0 1H10" stroke="#444" strokeWidth="1.200" /></svg>
      <div className="ml-[2px] w-[125px] h-[14px] flex items-center relative">
        <div className="w-full h-px bg-[#666]" />
        <div className="absolute left-[60px] top-0 w-[6px] h-[14px] bg-[#666]" />
      </div>
      <svg width="10" height="10" viewBox="0 0 10 10" className="ml-[5px]"><path d="M0 5H10M5 0V10" stroke="#444" strokeWidth="1.200" /></svg>
      <span className="ml-[18px] w-[41px] text-[12.5px] text-[#444]">%100</span>
    </div>
  );
}

export default function App() {
  return (
    <div className="w-[1920px] h-[956px] overflow-hidden flex flex-col bg-[#e6e6e7] font-['Noto_Sans',sans-serif]">
      <Tabs />
      <Ribbon />
      <FormulaBar />
      <div className="h-[678px] shrink-0 flex bg-[#e2e3e1]">
        <div className="w-[1896px] shrink-0 flex flex-col">
          <Grid />
          <SheetTabs />
        </div>
        <VScroll />
      </div>
      <StatusBar />
    </div>
  );
}
